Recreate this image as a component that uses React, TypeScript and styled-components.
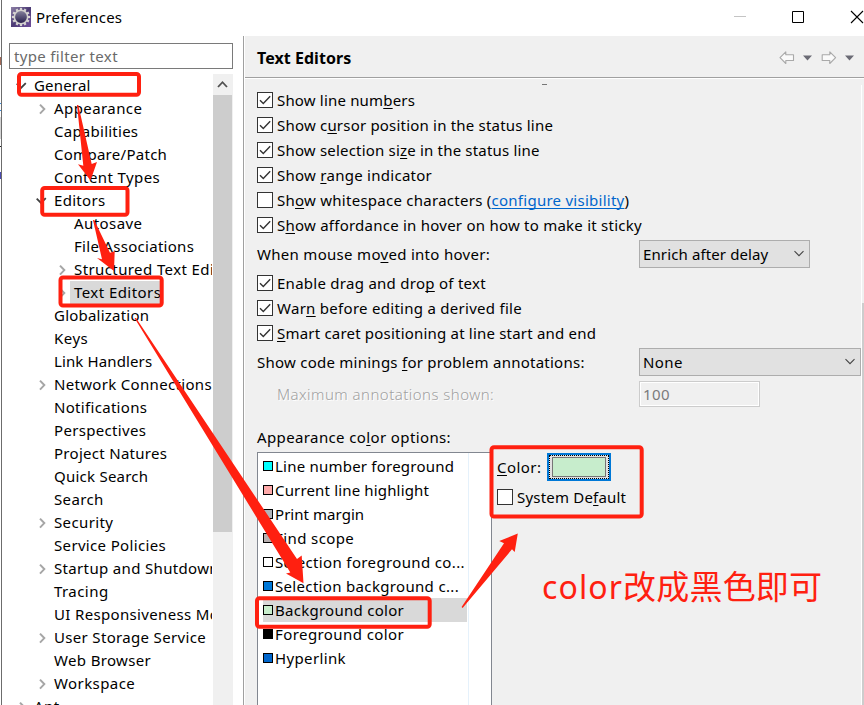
import React from 'react';
import styled, { createGlobalStyle, css } from 'styled-components';

const RED = '#ff2010';

const GlobalStyle = createGlobalStyle`
  *, *::before, *::after { box-sizing: border-box; }
  body {
    margin: 0;
    overflow: hidden;
    background: #fff;
    color: #000;
    font: 15px/20px "Noto Sans", "Noto Sans CJK SC", sans-serif;
  }
`;

const Screen = styled.div`
  position: relative;
  display: flex;
  width: 864px;
  height: 705px;
  overflow: hidden;
  background: #fff;
`;

/* Sliver of the application window behind the dialog */
const Backdrop = styled.div`
  display: flex;
  flex-direction: column;
  flex: none;
  width: 1px;
`;

const Fragment = styled.div<{ $h: number; $color: string }>`
  flex: none;
  height: ${p => p.$h}px;
  background: ${p => p.$color};
`;

const Dialog = styled.div`
  display: flex;
  flex-direction: column;
  flex: 1;
  min-width: 0;
  border-left: 1px solid #6c6c6c;
`;

const TitleBar = styled.header`
  display: flex;
  align-items: center;
  flex: none;
  height: 36px;
  padding: 0 0 2px 9px;
`;

const Label = styled.span<{ $track?: number }>`
  white-space: nowrap;
  letter-spacing: ${p => p.$track ?? 0.3}px;

  u {
    text-underline-offset: 2px;
    text-decoration-thickness: 1px;
    text-decoration-skip-ink: none;
  }
`;

const AppTitle = styled(Label)`
  flex: 1;
  margin-left: 5px;
`;

const CaptionButtons = styled.div`
  display: flex;
  align-items: center;
  gap: 45px;

  svg { display: block; }
`;

const Body = styled.div`
  display: flex;
  flex: 1;
  min-height: 0;
`;

const Sidebar = styled.aside`
  display: flex;
  flex-direction: column;
  flex: none;
  width: 242px;
  padding: 7px 10px 0 7px;
  border-right: 1px solid #a0a0a0;
`;

const FilterBox = styled.div`
  flex: none;
  width: 224px;
  height: 26px;
  padding: 2px 3px 0 4px;
  border: 1px solid #7a7a7a;
  color: #6a6a6a;
`;

const TreeArea = styled.div`
  display: flex;
  flex: 1;
  min-height: 0;
  margin-top: 5px;
`;

const Tree = styled.div`
  width: 203px;
  margin-right: 1px;
  overflow: hidden;
`;

const TreeRow = styled.div<{ $level: number }>`
  display: flex;
  align-items: center;
  height: 23px;
  padding-left: ${p => p.$level * 20 + 6}px;
`;

const Twisty = styled.svg`
  flex: none;
  width: 14px;
  height: 14px;
  fill: none;
`;

const NodeText = styled(Label)<{ $selected?: boolean }>`
  height: 23px;
  padding: 1px 1px 0 5px;
  ${p => p.$selected && css`
    padding-left: 4px;
    margin-left: 1px;
    background: #d9d9d9;
  `}
`;

const Scrollbar = styled.div`
  flex: none;
  width: 20px;
  background: #f0f0f0;

  svg { display: block; }
`;

const Thumb = styled.div`
  width: 19px;
  height: 437px;
  background: #cdcdcd;
`;

const Page = styled.main`
  display: flex;
  flex-direction: column;
  flex: 1;
  min-width: 0;
  margin-left: 1px;
  background: #f0f0f0;
`;

const PageHeader = styled.div`
  display: flex;
  align-items: center;
  flex: none;
  height: 43px;
  padding: 1px 8px 0 12px;
  border-bottom: 1px solid #fff;
  box-shadow: inset 0 -1px 0 #a0a0a0;
`;

const PageTitle = styled.h1`
  flex: 1;
  margin: 0;
  font-size: 16px;
  font-weight: 700;
  line-height: 20px;
  letter-spacing: 0.05px;
`;

const Content = styled.div`
  display: flex;
  flex: 1;
  min-height: 0;
`;

const Form = styled.div`
  display: flex;
  flex-direction: column;
  flex: 1;
  min-width: 0;
  padding-left: 12px;
`;

const ClippedLine = styled.div`
  flex: none;
  height: 8px;
  padding: 5px 0 0 285px;

  &::after {
    content: '';
    display: block;
    width: 5px;
    height: 1px;
    background: #777;
  }
`;

const CheckRow = styled.div`
  display: flex;
  align-items: center;
  flex: none;
  height: 25px;
`;

const Box = styled.span`
  display: block;
  flex: none;
  width: 16px;
  height: 16px;
  margin-right: 4px;
  border: 1px solid #333;
  background: #fff;

  svg { display: block; }
`;

const FieldRow = styled.div<{ $h: number; $indent?: number }>`
  display: flex;
  align-items: center;
  flex: none;
  height: ${p => p.$h}px;
  padding-left: ${p => p.$indent ?? 0}px;
`;

const FieldLabel = styled(Label)<{ $w: number; $disabled?: boolean }>`
  flex: none;
  width: ${p => p.$w}px;
  ${p => p.$disabled && css`
    color: #a0a0a0;
    font-weight: 300;
    text-shadow: 1px 1px 0 #fff;
  `}
`;

const Combo = styled.div<{ $w: number }>`
  display: flex;
  align-items: center;
  justify-content: space-between;
  width: ${p => p.$w}px;
  height: 28px;
  padding: 1px 4px 0 3px;
  border: 1px solid #adadad;
  background: #e1e1e1;
`;

const DisabledInput = styled.div`
  width: 121px;
  height: 26px;
  padding: 2px 3px 0;
  border: 1px solid #ccc;
  box-shadow: inset 0 0 0 1px #fff;
  color: #7b7b7b;
`;

const SectionLabel = styled(Label)`
  flex: none;
  height: 25px;
  margin-top: 17px;
`;

const ColorArea = styled.div`
  display: flex;
  flex: 1;
  min-height: 0;
`;

const ColorList = styled.div`
  flex: none;
  width: 235px;
  padding: 1px 0 0 5px;
  border: 1px solid #828790;
  border-bottom: 0;
  background: linear-gradient(90deg, transparent 210px, #e5f1fb 210px, #e5f1fb 211px, transparent 211px) #fff;
`;

const ColorRow = styled.div<{ $selected?: boolean }>`
  display: flex;
  align-items: center;
  width: 204px;
  height: 24px;
  background: ${p => (p.$selected ? '#d9d9d9' : 'transparent')};
`;

const Swatch = styled.span<{ $color: string }>`
  flex: none;
  width: 10px;
  height: 10px;
  margin: 0 2px 1px 0;
  border: 1px solid #000;
  background: ${p => p.$color};
`;

const ColorControls = styled.div`
  padding: 1px 0 0 5px;
`;

const ColorButton = styled.div`
  width: 64px;
  height: 28px;
  margin-left: 6px;
  padding: 1px;
  border: 2px solid #0078d7;
  background: #e1e1e1;
  outline: 1px dotted #000;
  outline-offset: -3px;
`;

const ColorSample = styled.div`
  width: 54px;
  height: 20px;
  margin: 1px 0 0 2px;
  border: 1px solid #767676;
  background: #c7edcc;
`;

const ColorField = styled.div`
  display: flex;
  align-items: center;
  height: 28px;
`;

const DefaultField = styled(CheckRow)`
  height: 32px;
`;

const PageScroll = styled.div`
  flex: none;
  width: 3px;
  margin-top: 6px;
  padding-top: 218px;
  border-left: 1px solid #fff;
`;

const PageThumb = styled.div`
  height: 100%;
  background: #cdcdcd;
`;

const Overlay = styled.svg`
  position: absolute;
  inset: 0;
  pointer-events: none;
`;

const Note = styled.div`
  position: absolute;
  left: 542px;
  top: 564px;
  color: ${RED};
  font-size: 33px;
  line-height: 46px;
  letter-spacing: 0.2px;
  white-space: nowrap;
`;

const NoteLatin = styled.span`
  font-size: 32px;
  letter-spacing: 1.1px;
`;

const Link = styled.span`
  color: #0066cc;
  text-decoration: underline;
  text-decoration-thickness: 1px;
  text-underline-offset: 2px;
  text-decoration-skip-ink: none;
`;

type State = 'open' | 'closed' | 'leaf';
const tree: { text: string; level: number; state: State; track: number; selected?: boolean }[] = [
  { text: 'General', level: 0, state: 'open', track: 0.18 },
  { text: 'Appearance', level: 1, state: 'closed', track: 0.42 },
  { text: 'Capabilities', level: 1, state: 'leaf', track: 0.25 },
  { text: 'Compare/Patch', level: 1, state: 'leaf', track: 0.28 },
  { text: 'Content Types', level: 1, state: 'leaf', track: 0.41 },
  { text: 'Editors', level: 1, state: 'open', track: 0.3 },
  { text: 'Autosave', level: 2, state: 'leaf', track: 0.42 },
  { text: 'File Associations', level: 2, state: 'leaf', track: 0.29 },
  { text: 'Structured Text Editors', level: 2, state: 'closed', track: 0.4 },
  { text: 'Text Editors', level: 2, state: 'closed', track: 0.44, selected: true },
  { text: 'Globalization', level: 1, state: 'leaf', track: 0.22 },
  { text: 'Keys', level: 1, state: 'leaf', track: 0.5 },
  { text: 'Link Handlers', level: 1, state: 'leaf', track: 0.12 },
  { text: 'Network Connections', level: 1, state: 'closed', track: 0.32 },
  { text: 'Notifications', level: 1, state: 'leaf', track: 0.31 },
  { text: 'Perspectives', level: 1, state: 'leaf', track: 0.33 },
  { text: 'Project Natures', level: 1, state: 'leaf', track: 0.29 },
  { text: 'Quick Search', level: 1, state: 'leaf', track: 0.24 },
  { text: 'Search', level: 1, state: 'leaf', track: 0.36 },
  { text: 'Security', level: 1, state: 'closed', track: 0.38 },
  { text: 'Service Policies', level: 1, state: 'leaf', track: 0.34 },
  { text: 'Startup and Shutdown', level: 1, state: 'closed', track: 0.34 },
  { text: 'Tracing', level: 1, state: 'leaf', track: 0.44 },
  { text: 'UI Responsiveness Monitoring', level: 1, state: 'leaf', track: 0.34 },
  { text: 'User Storage Service', level: 1, state: 'closed', track: 0.33 },
  { text: 'Web Browser', level: 1, state: 'leaf', track: 0.35 },
  { text: 'Workspace', level: 1, state: 'closed', track: 0.42 },
  { text: 'Ant', level: 0, state: 'closed', track: 0.4 },
];

const colors: { text: string; color: string; track: number; selected?: boolean }[] = [
  { text: 'Line number foreground', color: '#00ffff', track: 0.22 },
  { text: 'Current line highlight', color: '#ffaaaa', track: 0.16 },
  { text: 'Print margin', color: '#b0b4b9', track: 0.05 },
  { text: 'Find scope', color: '#b9b0b0', track: 0.4 },
  { text: 'Selection foreground co...', color: '#ffffff', track: 0.36 },
  { text: 'Selection background c...', color: '#0078d7', track: 0.33 },
  { text: 'Background color', color: '#c7edcc', track: 0.27, selected: true },
  { text: 'Foreground color', color: '#000000', track: 0.42 },
  { text: 'Hyperlink', color: '#0066cc', track: 0.36 },
];

/* Label with one underlined access key at the given index */
function Mnemonic({ text, at }: { text: string; at: number }) {
  return <>{text.slice(0, at)}<u>{text[at]}</u>{text.slice(at + 1)}</>;
}

function Check({ checked }: { checked?: boolean }) {
  return (
    <Box>
      {checked && (
        <svg width="14" height="14" viewBox="0 0 14 14" fill="none" stroke="#333" strokeWidth="1.4">
          <path d="M2 7.2 5.3 10.5 12.2 3.3" />
        </svg>
      )}
    </Box>
  );
}

function Option({ text, at, track, checked = true }: { text: string; at: number; track: number; checked?: boolean }) {
  return (
    <CheckRow>
      <Check checked={checked} />
      <Label $track={track}><Mnemonic text={text} at={at} /></Label>
    </CheckRow>
  );
}

function Expander({ state }: { state: State }) {
  return (
    <Twisty viewBox="0 0 14 14">
      {state === 'closed' && <path d="M5 2.6 9.3 7.1 5 11.6" stroke="#a6a6a6" strokeWidth="2" />}
      {state === 'open' && <path d="M1.7 4.6 6 8.9 10.8 4.1" stroke="#404040" strokeWidth="1.8" />}
    </Twisty>
  );
}

function ComboArrow() {
  return (
    <svg width="12" height="8" viewBox="0 0 12 8" fill="none" stroke="#444" strokeWidth="1.1">
      <path d="M1.5 1.2 6 5.7 10.5 1.2" />
    </svg>
  );
}

function EclipseIcon() {
  const teeth = Array.from({ length: 12 }, (_, i) => i * 30);
  return (
    <svg width="20" height="20" viewBox="0 0 20 20">
      <defs>
        <linearGradient id="plate" x2="1" y2="1">
          <stop offset="0" stopColor="#8d80a6" />
          <stop offset="0.5" stopColor="#4c3b75" />
          <stop offset="1" stopColor="#6f4f9c" />
        </linearGradient>
        <linearGradient id="lens" x2="0" y2="1">
          <stop offset="0" stopColor="#8a86a0" />
          <stop offset="1" stopColor="#231a4a" />
        </linearGradient>
      </defs>
      <rect width="20" height="20" fill="url(#plate)" />
      {teeth.map(a => (
        <rect key={a} x="8.9" y="0.9" width="2.2" height="3" fill="#d8d6d4" transform={`rotate(${a} 10 10)`} />
      ))}
      <circle cx="10" cy="10" r="6.7" fill="url(#lens)" stroke="#d2d0ce" strokeWidth="1.6" />
    </svg>
  );
}

function NavIcons() {
  return (
    <svg width="78" height="16" viewBox="0 0 78 16">
      <g fill="#fafafa" stroke="#a9a9a9" strokeWidth="1.1" strokeLinejoin="round">
        <path d="M2 7.7 7.8 1.8V4.8H15.5V10.5H7.8V13.5Z" />
        <path d="M57.6 7.7 51.8 1.8V4.8H44.2V10.5H51.8V13.5Z" />
      </g>
      <path d="M25 5.5H34L29.5 10.5ZM67 5.5H76L71.5 10.5Z" fill="#6b6b75" />
    </svg>
  );
}

function Annotations() {
  return (
    <Overlay width="864" height="705" viewBox="0 0 864 705">
      <g fill="none" stroke={RED} strokeWidth="4">
        <rect x="19" y="74" width="120" height="20.8" rx="2.5" />
        <rect x="42.2" y="188" width="85.3" height="26.8" rx="2.5" />
        <rect x="60.5" y="277.5" width="101.2" height="28" rx="2.5" />
        <rect x="257" y="598.3" width="172.7" height="28.4" rx="2.5" />
        <rect x="491.5" y="447.3" width="150.2" height="69.2" rx="2.5" />
      </g>
      <g fill={RED}>
        <path d="M77 105 83.3 165.7 78 164.3 90.5 180.5 97 162 91.7 164 78.3 105Z" />
        <path d="M93 220 102 259.3 97 258 114 271 114.7 251.3 110 252.7 94.2 220Z" />
        <path d="M134.5 318 290.3 572.5 286 573.5 303.5 583.3 301.7 555.5 297 559 136 318Z" />
        <path d="M461.6 607 504 543.3 499.3 541 517.8 533.5 514.7 552 512 549.3 462.6 608Z" />
      </g>
    </Overlay>
  );
}

export default function App() {
  return (
    <Screen>
      <GlobalStyle />
      <Backdrop>
        <Fragment $h={57} $color="#fff" />
        <Fragment $h={8} $color="#a46a58" />
        <Fragment $h={38} $color="#fff" />
        <Fragment $h={1} $color="#3d8fe0" />
        <Fragment $h={6} $color="#fff" />
        <Fragment $h={1} $color="#3d8fe0" />
        <Fragment $h={6} $color="#fff" />
        <Fragment $h={22} $color="#d4d4d4" />
        <Fragment $h={7} $color="#fff" />
        <Fragment $h={1} $color="#222" />
        <Fragment $h={25} $color="#fff" />
        <Fragment $h={7} $color="#4a4ab0" />
      </Backdrop>
      <Dialog>
        <TitleBar>
          <EclipseIcon />
          <AppTitle $track={0.25}>Preferences</AppTitle>
          <CaptionButtons>
            <svg width="12" height="14" viewBox="0 0 12 14"><path d="M0 6.5H12" stroke="#c4c4c4" /></svg>
            <svg width="14" height="14" viewBox="0 0 14 14"><path d="M1.5 1.5H12.5V12.5H1.5Z" fill="none" stroke="#000" /></svg>
            <svg width="14" height="14" viewBox="0 0 14 14"><path d="M1 1 13 13M13 1 1 13" stroke="#000" strokeWidth="1.1" /></svg>
          </CaptionButtons>
        </TitleBar>
        <Body>
          <Sidebar>
            <FilterBox><Label $track={0.34}>type filter text</Label></FilterBox>
            <TreeArea>
              <Tree>
                {tree.map(n => (
                  <TreeRow key={n.text} $level={n.level}>
                    <Expander state={n.state} />
                    <NodeText $track={n.track} $selected={n.selected}>{n.text}</NodeText>
                  </TreeRow>
                ))}
              </Tree>
              <Scrollbar>
                <svg width="20" height="21" viewBox="0 0 20 21" fill="none">
                  <path d="M5 13 9.5 8.2 14 13" stroke="#505050" strokeWidth="1.8" />
                </svg>
                <Thumb />
              </Scrollbar>
            </TreeArea>
          </Sidebar>
          <Page>
            <PageHeader>
              <PageTitle>Text Editors</PageTitle>
              <NavIcons />
            </PageHeader>
            <Content>
              <Form>
                <ClippedLine />
                <Option text="Show line numbers" at={13} track={0.18} />
                <Option text="Show cursor position in the status line" at={6} track={0.2} />
                <Option text="Show selection size in the status line" at={17} track={0.19} />
                <Option text="Show range indicator" at={5} track={0.27} />
                <CheckRow>
                  <Check />
                  <Label $track={0.26}>
                    <Mnemonic text="Show whitespace characters (" at={2} />
                    <Link>configure visibility</Link>)
                  </Label>
                </CheckRow>
                <Option text="Show affordance in hover on how to make it sticky" at={1} track={0.24} />
                <FieldRow $h={33}>
                  <FieldLabel $w={382} $track={0.3}><Mnemonic text="When mouse moved into hover:" at={13} /></FieldLabel>
                  <Combo $w={171}><Label $track={0.12}>Enrich after delay</Label><ComboArrow /></Combo>
                </FieldRow>
                <Option text="Enable drag and drop of text" at={19} track={0.27} />
                <Option text="Warn before editing a derived file" at={3} track={0.28} />
                <Option text="Smart caret positioning at line start and end" at={0} track={0.2} />
                <FieldRow $h={33}>
                  <FieldLabel $w={382} $track={0.25}><Mnemonic text="Show code minings for problem annotations:" at={18} /></FieldLabel>
                  <Combo $w={222}><Label $track={0.4}>None</Label><ComboArrow /></Combo>
                </FieldRow>
                <FieldRow $h={32} $indent={20}>
                  <FieldLabel $w={362} $track={0.46} $disabled>Maximum annotations shown:</FieldLabel>
                  <DisabledInput><Label $track={0.4}>100</Label></DisabledInput>
                </FieldRow>
                <SectionLabel $track={0.38}><Mnemonic text="Appearance color options:" at={13} /></SectionLabel>
                <ColorArea>
                  <ColorList>
                    {colors.map(c => (
                      <ColorRow key={c.text} $selected={c.selected}>
                        <Swatch $color={c.color} />
                        <Label $track={c.track}>{c.text}</Label>
                      </ColorRow>
                    ))}
                  </ColorList>
                  <ColorControls>
                    <ColorField>
                      <Label $track={0.45}><Mnemonic text="Color:" at={0} /></Label>
                      <ColorButton><ColorSample /></ColorButton>
                    </ColorField>
                    <DefaultField>
                      <Check />
                      <Label $track={0.2}><Mnemonic text="System Default" at={9} /></Label>
                    </DefaultField>
                  </ColorControls>
                </ColorArea>
              </Form>
              <PageScroll><PageThumb /></PageScroll>
            </Content>
          </Page>
        </Body>
      </Dialog>
      <Annotations />
      <Note><NoteLatin>color</NoteLatin>改成黑色即可</Note>
    </Screen>
  );
}
